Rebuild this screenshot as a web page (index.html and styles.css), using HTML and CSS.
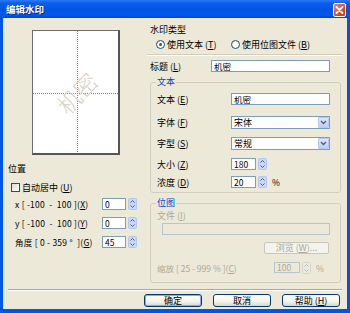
FILE: index.html
```html
<!DOCTYPE html>
<html>
<head>
<meta charset="utf-8">
<link rel="stylesheet" href="styles.css">
</head>
<body>
<div class="window">
  <div class="titlebar">
    <span class="title">编辑水印</span>
    <span class="close"><svg width="13" height="14" viewBox="0 0 13 14"><path d="M3.5 4 L9.5 10 M9.5 4 L3.5 10" stroke="#fff" stroke-width="1.8" stroke-linecap="round"/></svg></span>
  </div>
  <div class="client">
    <div class="main">
      <div class="left">
        <div class="preview"><span class="wm">机密</span></div>
        <div class="pos-title">位置</div>
        <div class="check-row"><span class="checkbox"></span><span>自动居中 (<u>U</u>)</span></div>
        <div class="num-row"><span class="nl">x [ -100  -  100 ](<u>X</u>)</span><span class="tbox sm">0</span><svg class="spin" width="9" height="12" viewBox="0 0 9 12"><rect x="0.5" y="0.5" width="8" height="11" rx="1" fill="#C9D7F9" stroke="#B4C6EF"/><path d="M2.5 4.5 L4.5 2.5 L6.5 4.5 M2.5 7.5 L4.5 9.5 L6.5 7.5" fill="none" stroke="#4D6185"/></svg></div>
        <div class="num-row"><span class="nl">y [ -100  -  100 ](<u>Y</u>)</span><span class="tbox sm">0</span><svg class="spin" width="9" height="12" viewBox="0 0 9 12"><rect x="0.5" y="0.5" width="8" height="11" rx="1" fill="#C9D7F9" stroke="#B4C6EF"/><path d="M2.5 4.5 L4.5 2.5 L6.5 4.5 M2.5 7.5 L4.5 9.5 L6.5 7.5" fill="none" stroke="#4D6185"/></svg></div>
        <div class="num-row"><span class="nl">角度 [ 0 - 359 °  ](<u>G</u>)</span><span class="tbox sm">45</span><svg class="spin" width="9" height="12" viewBox="0 0 9 12"><rect x="0.5" y="0.5" width="8" height="11" rx="1" fill="#C9D7F9" stroke="#B4C6EF"/><path d="M2.5 4.5 L4.5 2.5 L6.5 4.5 M2.5 7.5 L4.5 9.5 L6.5 7.5" fill="none" stroke="#4D6185"/></svg></div>
      </div>
      <div class="right">
        <div class="type-title">水印类型</div>
        <div class="radios">
          <span class="radio on"></span><span class="rtext r1">使用文本 (<u>T</u>)</span>
          <span class="radio r2"></span><span class="rtext">使用位图文件 (<u>B</u>)</span>
        </div>
        <div class="hsep"></div>
        <div class="title-row"><span class="tl">标题 (<u>L</u>)</span><span class="tbox wide">机密</span></div>
        <fieldset class="group g1">
          <legend>文本</legend>
          <div class="frow r-text"><span class="fl">文本 (<u>E</u>)</span><span class="tbox wide2">机密</span></div>
          <div class="frow r-font"><span class="fl">字体 (<u>F</u>)</span><span class="select">宋体<span class="dd"><svg width="9" height="9" viewBox="0 0 9 9"><path d="M2 3 L4.5 5.5 L7 3" fill="none" stroke="#4D6185" stroke-width="1.4"/></svg></span></span></div>
          <div class="frow r-style"><span class="fl">字型 (<u>S</u>)</span><span class="select">常规<span class="dd"><svg width="9" height="9" viewBox="0 0 9 9"><path d="M2 3 L4.5 5.5 L7 3" fill="none" stroke="#4D6185" stroke-width="1.4"/></svg></span></span></div>
          <div class="frow r-size"><span class="fl">大小 (<u>Z</u>)</span><span class="tbox num">180</span><svg class="spin" width="9" height="12" viewBox="0 0 9 12"><rect x="0.5" y="0.5" width="8" height="11" rx="1" fill="#C9D7F9" stroke="#B4C6EF"/><path d="M2.5 4.5 L4.5 2.5 L6.5 4.5 M2.5 7.5 L4.5 9.5 L6.5 7.5" fill="none" stroke="#4D6185"/></svg></div>
          <div class="frow r-dens"><span class="fl">浓度 (<u>D</u>)</span><span class="tbox num">20</span><svg class="spin" width="9" height="12" viewBox="0 0 9 12"><rect x="0.5" y="0.5" width="8" height="11" rx="1" fill="#C9D7F9" stroke="#B4C6EF"/><path d="M2.5 4.5 L4.5 2.5 L6.5 4.5 M2.5 7.5 L4.5 9.5 L6.5 7.5" fill="none" stroke="#4D6185"/></svg><span class="pct">%</span></div>
        </fieldset>
        <fieldset class="group g2">
          <legend>位图</legend>
          <div class="dis file-l">文件 (<u>I</u>)</div>
          <div class="tbox file disabled"></div>
          <div class="browse">浏览 (<u>W</u>)...</div>
          <div class="frow r-scale dis"><span class="sl">缩放 [ 25 - 999 % ](<u>C</u>)</span><span class="tbox num2 disabled">100</span><svg class="spin" width="9" height="12" viewBox="0 0 9 12"><rect x="0.5" y="0.5" width="8" height="11" rx="1" fill="#ECEBE3" stroke="#D6D4C8"/><path d="M2.5 4.5 L4.5 2.5 L6.5 4.5 M2.5 7.5 L4.5 9.5 L6.5 7.5" fill="none" stroke="#B8B6A8"/></svg><span class="pct">%</span></div>
        </fieldset>
      </div>
    </div>
    <div class="sep"></div>
    <div class="buttons">
      <span class="btn default">确定</span>
      <span class="btn">取消</span>
      <span class="btn">帮助 (<u>H</u>)</span>
    </div>
  </div>
</div>
</body>
</html>
```
FILE: styles.css
```css
* { box-sizing: border-box; margin: 0; padding: 0; }
body {
  margin: 0;
  width: 350px;
  height: 313px;
  overflow: hidden;
  font-family: "Noto Sans CJK SC", "Liberation Sans", sans-serif;
  font-size: 9px;
  color: #000;
  background: #fff;
}
u { text-decoration: underline; text-underline-offset: 1px; }

.window {
  width: 350px;
  height: 313px;
  background: #0055E5;
  display: flex;
  flex-direction: column;
}
.titlebar {
  height: 18px;
  flex: 0 0 18px;
  display: flex;
  align-items: center;
  justify-content: space-between;
  padding: 0 4px 0 6px;
  background: linear-gradient(to bottom, #2B7BF3 0%, #0A5DEB 18%, #0055E5 55%, #0058EA 85%, #0043D6 100%);
}
.title {
  color: #fff;
  font-weight: bold;
  font-size: 9.5px;
  line-height: 12px;
  text-shadow: 1px 1px 0 #0A2A8A;
}
.close {
  width: 13px;
  height: 14px;
  border: 1px solid #fff;
  border-radius: 2px;
  background: linear-gradient(135deg, #EB8A62 0%, #D9502A 55%, #C73E1C 100%);
  display: flex;
  align-items: center;
  justify-content: center;
  margin-top: 1px;
}
.close svg { display: block; margin: -1px; }

.client {
  flex: 1;
  margin: 0 3px 4px 3px;
  background: #ECE9D8;
  display: flex;
  flex-direction: column;
}
.main {
  height: 265px;
  display: flex;
}

/* left column */
.left {
  width: 137px;
  display: flex;
  flex-direction: column;
}
.preview {
  position: relative;
  margin: 12px 0 0 29px;
  width: 88px;
  height: 125px;
  background: #fff;
  border: 1px solid #6E6E6E;
  border-right: 2px solid #555;
  border-bottom: 2px solid #555;
  overflow: hidden;
}
.preview::before {
  content: "";
  position: absolute;
  left: 44px;
  top: 0;
  bottom: 0;
  width: 1px;
  background: repeating-linear-gradient(to bottom, #8A8A80 0 1px, transparent 1px 2px);
}
.preview::after {
  content: "";
  position: absolute;
  top: 62px;
  left: 0;
  right: 0;
  height: 1px;
  background: repeating-linear-gradient(to right, #8A8A80 0 1px, transparent 1px 2px);
}
.wm {
  position: absolute;
  left: 44px;
  top: 62px;
  transform: translate(-50%, -50%) rotate(-47deg);
  font-size: 23px;
  line-height: 23px;
  font-weight: 300;
  color: #D6D3C4;
  white-space: nowrap;
  z-index: 1;
}
.pos-title {
  margin: 7px 0 0 5px;
  height: 14px;
  line-height: 14px;
}
.check-row {
  margin-top: 4px;
  height: 14px;
  display: flex;
  align-items: center;
  padding-left: 8px;
}
.checkbox {
  width: 9px;
  height: 9px;
  border: 1px solid #1C5180;
  background: linear-gradient(135deg, #DCDBD4, #fff);
  margin-right: 2px;
}
.num-row {
  height: 19px;
  display: flex;
  align-items: center;
  padding-left: 12px;
}
.num-row:first-of-type { margin-top: 1px; }
.nl {
  width: 87px;
  white-space: pre;
  font-size: 8.5px;
  letter-spacing: 0.25px;
}
.spin { display: block; margin-left: 2px; flex: 0 0 9px; }

.tbox {
  display: block;
  height: 12px;
  border: 1px solid #7F9DB9;
  background: #fff;
  padding-left: 2px;
  line-height: 10px;
  font-size: 8.5px;
  white-space: nowrap;
}
.tbox.sm { width: 24px; }
.tbox.disabled { background: #ECE9D8; border-color: #B9C3D2; color: #ACA899; }

/* right column */
.right {
  margin-left: 7px;
  width: 196px;
  display: flex;
  flex-direction: column;
}
.type-title {
  margin-top: 6px;
  height: 12px;
  line-height: 12px;
  padding-left: 3px;
}
.radios {
  margin-top: 2px;
  height: 12px;
  display: flex;
  align-items: center;
  padding-left: 9px;
}
.radio {
  width: 9px;
  height: 9px;
  border-radius: 50%;
  border: 1px solid #1C5180;
  background: radial-gradient(circle at 60% 60%, #fff 0 40%, #DCDBD4 100%);
  position: relative;
}
.radio.on::after {
  content: "";
  position: absolute;
  left: 2px;
  top: 2px;
  width: 3px;
  height: 3px;
  border-radius: 50%;
  background: #2C6A2C;
}
.rtext { margin-left: 2px; }
.rtext.r1 { width: 64px; }
.hsep {
  margin-top: 4px;
  height: 2px;
  border-top: 1px solid #D0CDBE;
  border-bottom: 1px solid #fff;
}
.title-row {
  margin-top: 4px;
  height: 12px;
  display: flex;
  align-items: center;
  padding-left: 3px;
}
.tl { width: 61px; }
.tbox.wide { width: 119px; }

.group {
  margin: 0 2px 0 3px;
  border: 1px solid #D0D0BF;
  border-radius: 3px;
  padding: 0 6px;
}
.group legend {
  color: #0046D5;
  height: 12px;
  line-height: 12px;
  padding: 0 1px;
  margin-left: -1px;
}
.g1 { margin-top: 4px; padding-bottom: 4px; }
.g2 { margin-top: 4px; padding-bottom: 9px; }

.frow {
  display: flex;
  align-items: center;
}
.fl { width: 74px; }
.r-text { margin-top: 5px; height: 12px; }
.r-font { margin-top: 11px; height: 13px; }
.r-style { margin-top: 8px; height: 13px; }
.r-size { margin-top: 8px; height: 12px; }
.r-dens { margin-top: 6px; height: 12px; }
.tbox.wide2 { width: 99px; }
.tbox.num { width: 25px; }
.tbox.num2 { width: 26px; }
.pct { margin-left: 5px; font-size: 8.5px; }

.select {
  position: relative;
  display: block;
  width: 99px;
  height: 13px;
  border: 1px solid #7F9DB9;
  background: #fff;
  padding-left: 2px;
  line-height: 11px;
}
.dd {
  position: absolute;
  right: 0;
  top: 0;
  width: 11px;
  height: 11px;
  background: linear-gradient(to bottom, #DCE6FD, #BCCEF8);
  border: 1px solid #B7C9F2;
  border-radius: 1px;
  display: flex;
  align-items: center;
  justify-content: center;
}
.dd svg { display: block; }

.dis { color: #ACA899; }
.file-l { margin-top: 1px; height: 12px; line-height: 12px; }
.tbox.file { margin: 1px 0 0 5px; width: 168px; height: 12px; }
.browse {
  margin: 7px 0 0 107px;
  width: 65px;
  height: 12px;
  border: 1px solid #C9C7BA;
  border-radius: 2px;
  color: #ACA899;
  text-align: center;
  line-height: 10px;
  background: #F4F3EE;
}
.r-scale { margin-top: 8px; height: 11px; }
.sl { width: 117px; white-space: pre; font-size: 8.5px; }
.r-scale .tbox { height: 11px; line-height: 9px; }

/* bottom */
.sep {
  margin: 6px 5px 0 5px;
  height: 2px;
  border-top: 1px solid #ACA899;
  border-bottom: 1px solid #fff;
}
.buttons {
  margin-top: 3px;
  display: flex;
  justify-content: flex-end;
  gap: 11px;
  padding-right: 7px;
}
.btn {
  width: 58px;
  height: 13px;
  border: 1px solid #003C74;
  border-radius: 3px;
  background: linear-gradient(to bottom, #FFFFFF 0%, #F3F2EC 60%, #D9D4C6 100%);
  text-align: center;
  line-height: 11px;
}
.btn.default { box-shadow: inset 0 0 0 1px #8CA8E8; }
```
